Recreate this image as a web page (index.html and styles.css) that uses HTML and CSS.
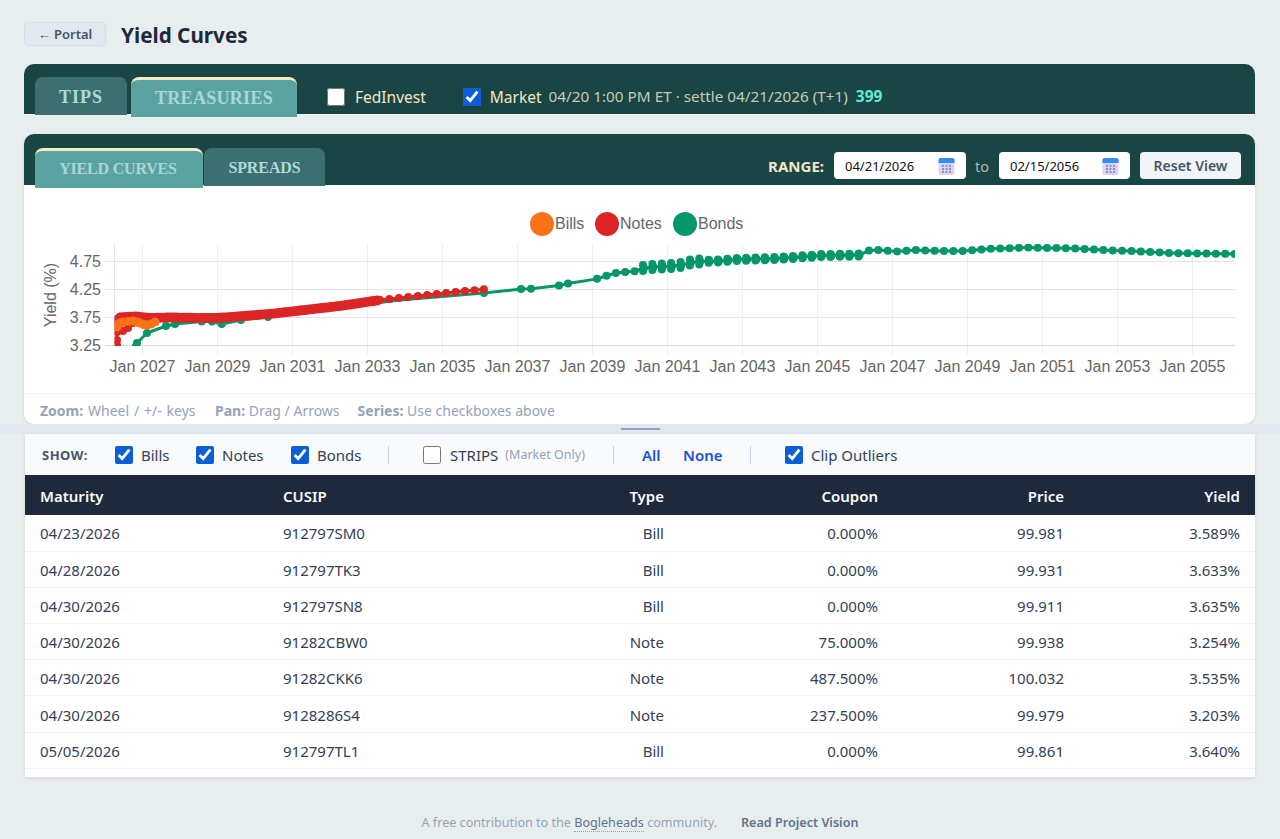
FILE: index.html
```html
<!DOCTYPE html>
<html lang="en">
<head>
<meta charset="utf-8">
<title>Yield Curves</title>
<link rel="stylesheet" href="styles.css">
</head>
<body>
<section class="top">
  <header class="page-head">
    <a class="portal-btn">← Portal</a>
    <h1 class="page-title">Yield Curves</h1>
  </header>

  <div class="bar source-bar">
    <div class="tabs">
      <div class="tab tab-main">TIPS</div>
      <div class="tab tab-main tab-active">TREASURIES</div>
    </div>
    <label class="src src-fed"><input type="checkbox" class="check"><span>FedInvest</span></label>
    <label class="src src-market"><input type="checkbox" class="check" checked><span>Market</span></label>
    <span class="market-meta">04/20 1:00 PM ET · settle 04/21/2026 (T+1)</span>
    <span class="market-count">399</span>
  </div>

  <div class="chart-card">
    <div class="bar chart-bar">
      <div class="tabs">
        <div class="tab tab-sub tab-active tab-yield">YIELD CURVES</div>
        <div class="tab tab-sub tab-spreads">SPREADS</div>
      </div>
      <div class="range">
        <span class="range-label">RANGE:</span>
        <div class="date-field date-a"><span>04/21/2026</span>
          <svg class="cal" viewBox="0 0 17 18"><use href="#cal-icon"/></svg></div>
        <span class="range-to">to</span>
        <div class="date-field date-b"><span>02/15/2056</span>
          <svg class="cal" viewBox="0 0 17 18"><use href="#cal-icon"/></svg></div>
        <button class="reset-btn">Reset View</button>
      </div>
    </div>
    <svg id="chart" class="chart" viewBox="24 185 1231 208" width="1231" height="208"></svg>
    <div class="hints">
      <span class="hint-zoom"><b>Zoom:</b> Wheel / +/- keys</span>
      <span><b>Pan:</b> Drag / Arrows</span>
      <span><b>Series:</b> Use checkboxes above</span>
    </div>
  </div>
</section>

<div class="splitter"><div class="splitter-handle"></div></div>

<section class="bottom">
  <div class="table-card">
    <div class="show-bar">
      <span class="show-label">SHOW:</span>
      <label class="opt opt-bills"><input type="checkbox" class="check" checked>Bills</label>
      <label class="opt opt-notes"><input type="checkbox" class="check" checked>Notes</label>
      <label class="opt opt-bonds"><input type="checkbox" class="check" checked>Bonds</label>
      <span class="sep sep-a"></span>
      <label class="opt opt-strips"><input type="checkbox" class="check check-light">STRIPS <small class="only">(Market Only)</small></label>
      <span class="sep sep-b"></span>
      <a class="quick quick-all">All</a>
      <a class="quick quick-none">None</a>
      <span class="sep sep-c"></span>
      <label class="opt opt-clip"><input type="checkbox" class="check" checked>Clip Outliers</label>
    </div>
    <table class="grid">
      <colgroup>
        <col class="c1"><col class="c2"><col class="c3"><col class="c4"><col class="c5"><col class="c6">
      </colgroup>
      <thead>
        <tr><th>Maturity</th><th>CUSIP</th><th class="r">Type</th><th class="r">Coupon</th><th class="r">Price</th><th class="r">Yield</th></tr>
      </thead>
      <tbody>
        <tr><td>04/23/2026</td><td>912797SM0</td><td class="r">Bill</td><td class="r">0.000%</td><td class="r">99.981</td><td class="r">3.589%</td></tr>
        <tr><td>04/28/2026</td><td>912797TK3</td><td class="r">Bill</td><td class="r">0.000%</td><td class="r">99.931</td><td class="r">3.633%</td></tr>
        <tr><td>04/30/2026</td><td>912797SN8</td><td class="r">Bill</td><td class="r">0.000%</td><td class="r">99.911</td><td class="r">3.635%</td></tr>
        <tr><td>04/30/2026</td><td>91282CBW0</td><td class="r">Note</td><td class="r">75.000%</td><td class="r">99.938</td><td class="r">3.254%</td></tr>
        <tr><td>04/30/2026</td><td>91282CKK6</td><td class="r">Note</td><td class="r">487.500%</td><td class="r">100.032</td><td class="r">3.535%</td></tr>
        <tr><td>04/30/2026</td><td>9128286S4</td><td class="r">Note</td><td class="r">237.500%</td><td class="r">99.979</td><td class="r">3.203%</td></tr>
        <tr><td>05/05/2026</td><td>912797TL1</td><td class="r">Bill</td><td class="r">0.000%</td><td class="r">99.861</td><td class="r">3.640%</td></tr>
      </tbody>
    </table>
  </div>
  <footer class="foot">
    <span>A free contribution to the <a class="foot-link">Bogleheads</a> community.</span>
    <a class="foot-vision">Read Project Vision</a>
  </footer>
</section>

<svg class="defs" width="0" height="0">
  <symbol id="cal-icon" viewBox="0 0 17 18">
    <rect class="cal-body" x="0.5" y="1" width="16" height="17" rx="2"/>
    <path class="cal-top" d="M0.5 6V3a2 2 0 0 1 2-2h12a2 2 0 0 1 2 2v3z"/>
    <g class="cal-dots">
      <rect x="4" y="8" width="2" height="2"/><rect x="7.5" y="8" width="2" height="2"/><rect x="11" y="8" width="2" height="2"/>
      <rect x="4" y="11" width="2" height="2"/><rect x="7.5" y="11" width="2" height="2"/><rect x="11" y="11" width="2" height="2"/>
      <rect x="4" y="14" width="2" height="2"/><rect x="7.5" y="14" width="2" height="2"/><rect x="11" y="14" width="2" height="2"/>
    </g>
  </symbol>
</svg>
<script src="chart.js"></script>
</body>
</html>
```

FILE: styles.css
```css
* { box-sizing: border-box; }
html, body { margin: 0; height: 100%; overflow: hidden; }
body {
  background: #e8eeee;
  font-family: "Noto Sans", "Open Sans", sans-serif;
  color: #1e293b;
}
.defs { position: absolute; }

.top { padding: 22px 25px 0 24px; }
.page-head { display: flex; align-items: center; height: 24px; }
.portal-btn {
  width: 82px; height: 24px; margin-right: 15px;
  display: flex; align-items: center; justify-content: center;
  background: #e2e8f0; border: 1px solid #d5dcea; border-radius: 4px;
  font-size: 13px; font-weight: 600; color: #475569;
}
.page-title { margin: 2px 0 0; font-size: 20.7px; font-weight: 700; color: #1e293b; line-height: 26px; }

.bar { background: #194545; border-radius: 10px 10px 0 0; display: flex; }
.source-bar {
  margin-top: 18px; height: 50px; padding: 13px 0 0 11px;
  align-items: flex-start; box-shadow: 0 1px 0 #f5f8f8;
}
.tabs { display: flex; align-items: flex-start; }
.tab {
  height: 38px; border-radius: 8px 8px 0 0; background: #3e6f70;
  color: #a9dcd8; font-family: "Liberation Serif", serif; font-weight: 700;
  display: flex; align-items: center; justify-content: center;
}
.tab-active { background: #5ba3a1; color: #a5d8d6; border-top: 3px solid #f8e8c4; height: 40px; }
.tab-main { font-size: 18px; letter-spacing: .3px; padding-top: 3px; }
.tab-main:first-child { width: 92px; margin-right: 4px; letter-spacing: 1px; }
.tab-main.tab-active { width: 166px; padding-top: 0; }
.tab-sub { font-size: 16px; letter-spacing: -.1px; padding-top: 2px; }
.tab-yield { width: 168px; margin-right: 1px; padding: 0 2px 2px 0; letter-spacing: -.2px; }
.tab-spreads { width: 121px; }

.src { display: flex; align-items: center; font-size: 15.5px; color: #f5e6c8; height: 18px; margin-top: 11px; }
.src .check { margin: 0 10px 0 0; }
.src-fed { margin-left: 30px; }
.src-market { margin-left: 37px; }
.src-market .check { margin-right: 9px; }
.check { width: 18px; height: 18px; margin: 0; accent-color: #0b5ed7; flex: none; }
.market-meta { font-size: 15.3px; color: #c5ccb6; margin: 9px 0 0 7px; line-height: 20px; }
.market-count { font-size: 15.5px; font-weight: 700; color: #5eead4; margin: 9px 0 0 8px; line-height: 20px; }

.chart-card {
  margin-top: 20px; background: #fff; border-radius: 10px;
  box-shadow: 0 1px 3px rgba(15, 23, 42, .12);
}
.chart-bar { height: 51px; padding: 14px 14px 0 11px; justify-content: space-between; align-items: flex-start; }
.range { display: flex; align-items: center; height: 27px; margin-top: 4px; }
.range-label { font-size: 15px; font-weight: 700; color: #f5e6c8; margin-right: 10px; }
.date-field {
  height: 27px; background: #fff; border-radius: 4px; padding: 0 11px;
  display: flex; align-items: center; justify-content: space-between;
  font-size: 13px; color: #111;
}
.date-a { width: 132px; }
.date-b { width: 131px; }
.cal { width: 17px; height: 18px; }
.cal-body { fill: #dcd3f2; }
.cal-top { fill: #2f8df5; }
.cal-dots rect { fill: #8d8fc9; }
.range-to { width: 13px; font-size: 14.5px; color: #a9b8b5; margin: 0 11px 0 9px; }
.reset-btn {
  width: 101px; height: 27px; margin-left: 10px; border: 0; border-radius: 4px;
  background: #f1f5f9; color: #475569; font: 600 14px "Noto Sans", sans-serif;
}

.chart { display: block; }
.grid-h { stroke: #e4e4e4; stroke-width: 1; }
.grid-v { stroke: #f1f1f1; stroke-width: 1; }
.axis-edge { stroke: #e6e6e6; stroke-width: 1; }
.axis-base { stroke: #d9d9d9; stroke-width: 1; }
.ax-text { font-family: "Liberation Sans", Arial, sans-serif; font-size: 16px; fill: #666; }
.line { fill: none; stroke-width: 3; stroke-linejoin: round; }
.bonds { stroke: #059669; fill: #059669; }
.notes { stroke: #dc2626; fill: #dc2626; }
.bills { stroke: #f97316; fill: #f97316; }
.dot { stroke: none; }
.line.bonds, .line.notes, .line.bills { fill: none; }

.hints {
  height: 31px; padding: 2px 16px 0; border-top: 1px solid #f1f5f9;
  display: flex; align-items: center; gap: 18px;
  font-size: 14px; color: #94a3b8;
  border-radius: 0 0 10px 10px;
}
.hints b { font-weight: 700; }
.hint-zoom { width: 157px; word-spacing: 1.2px; }

.splitter { height: 10px; background: #e2e8f0; padding-top: 4px; }
.splitter-handle { width: 39px; height: 2px; margin: 0 auto; background: #94a3b8; }

.bottom { padding: 0 25px; }
.table-card { height: 343px; background: #fff; overflow: hidden; box-shadow: 0 1px 4px rgba(15, 23, 42, .12); }
.show-bar {
  height: 41px; background: #f8fafc; padding-left: 17px;
  display: flex; align-items: center; font-size: 15px; color: #334155;
}
.show-label { font-size: 13px; font-weight: 700; color: #475569; letter-spacing: .5px; width: 73px; }
.opt { display: flex; align-items: center; }
.opt .check { margin-right: 8px; }
.opt-bills { width: 81px; }
.opt-notes { width: 95px; }
.opt-bonds { width: 97px; }
.sep { width: 1px; height: 18px; background: #cbd5e1; }
.sep-a { margin-right: 34px; }
.opt-strips { width: 190px; }
.opt-strips .check { margin-right: 9px; }
.only { font-size: 12.5px; color: #94a3b8; margin-left: 7px; }
.sep-b { margin-right: 28px; }
.quick { color: #1d4ed8; font-weight: 600; }
.quick-all { width: 41px; }
.quick-none { width: 67px; }
.sep-c { margin-right: 34px; }

.grid { width: 100%; table-layout: fixed; border-collapse: collapse; font-size: 15px; }
.c1 { width: 243px; } .c2 { width: 200px; } .c3 { width: 211px; }
.c4 { width: 214px; } .c5 { width: 186px; } .c6 { width: 176px; }
.grid th {
  height: 40px; padding: 1px 15px 0; background: #1e293b; color: #f8fafc;
  text-align: left; font-weight: 600;
}
.grid td { height: 36.2px; padding: 1px 15px 0; border-bottom: 1px solid #f1f5f9; color: #334155; }
.grid th.r, .grid td.r { text-align: right; }

.foot {
  height: 62px; padding-top: 36px; display: flex; justify-content: center; gap: 24px;
  font-size: 12.6px; color: #94a3b8; line-height: 20px;
}
.foot-link { color: #64748b; border-bottom: 1px dotted #94a3b8; }
.foot-vision { color: #64748b; font-weight: 600; }
```

FILE: chart.js
```js
(function () {
  var NS = 'http://www.w3.org/2000/svg';
  var svg = document.getElementById('chart');
  var L = 114.5, R = 1235, T = 244, B = 345;

  function el(name, attrs, parent, text) {
    var n = document.createElementNS(NS, name);
    for (var k in attrs) n.setAttribute(k, attrs[k]);
    if (text) n.textContent = text;
    (parent || svg).appendChild(n);
    return n;
  }
  function y(v) { return 344.7 - (v - 3.25) * 55.6; }
  function lerp(keys, x) {
    if (x <= keys[0][0]) return keys[0][1];
    for (var i = 1; i < keys.length; i++) {
      if (x <= keys[i][0]) {
        var a = keys[i - 1], b = keys[i];
        return a[1] + (b[1] - a[1]) * (x - a[0]) / (b[0] - a[0]);
      }
    }
    return keys[keys.length - 1][1];
  }

  // legend
  [['Bills', 542, 'bills'], ['Notes', 607, 'notes'], ['Bonds', 685, 'bonds']].forEach(function (s) {
    el('circle', { cx: s[1], cy: 224, r: 12, 'class': 'dot ' + s[2] });
    el('text', { x: s[1] + 13, y: 229, 'class': 'ax-text' }, svg, s[0]);
  });

  // grid
  var i;
  for (i = 0; i < 15; i++) {
    var gx = 142.5 + i * 75;
    el('line', { x1: gx, x2: gx, y1: T, y2: 355, 'class': 'grid-v' });
    el('text', { x: gx, y: 372, 'text-anchor': 'middle', 'class': 'ax-text' }, svg, 'Jan ' + (2027 + i * 2));
  }
  el('line', { x1: L, x2: L, y1: T, y2: B, 'class': 'axis-edge' });
  [4.75, 4.25, 3.75, 3.25].forEach(function (v) {
    var gy = Math.round(y(v)) + 0.5;
    el('line', { x1: 105, x2: R, y1: gy, y2: gy, 'class': v === 3.25 ? 'axis-base' : 'grid-h' });
    el('text', { x: 101, y: gy + 5, 'text-anchor': 'end', 'class': 'ax-text' }, svg, v.toFixed(2));
  });
  el('text', { x: 0, y: 0, 'text-anchor': 'middle', 'class': 'ax-text',
    transform: 'translate(56 295) rotate(-90)' }, svg, 'Yield (%)');

  // clip
  var defs = el('defs', {});
  var clip = el('clipPath', { id: 'plot' }, defs);
  el('rect', { x: L, y: T, width: R - L, height: B - T + 1 }, clip);
  var plot = el('g', { 'clip-path': 'url(#plot)' });

  function series(pts, cls, r) {
    el('polyline', {
      points: pts.map(function (p) { return p[0] + ',' + p[1]; }).join(' '),
      'class': 'line ' + cls
    }, plot);
    pts.forEach(function (p) {
      if (p[2]) return; // vertex only, no marker
      el('circle', { cx: p[0], cy: p[1], r: p[3] || r, 'class': 'dot ' + cls }, plot);
    });
  }

  // bonds
  var bondKeys = [
    [596.7, 279], [605.5, 276], [615.5, 273], [625, 272], [634, 271.5], [643, 268],
    [652, 267], [671, 266], [681, 265], [690, 262.5], [700, 261.5], [718, 261],
    [737, 259.5], [775, 258.5], [793, 257.5], [821, 255.5], [859, 255], [869, 250.5],
    [878, 250], [896, 251.5], [915, 250], [940, 251], [962, 251], [990, 248.8],
    [1030, 247.5], [1075, 248.5], [1110, 250.5], [1130, 251], [1150, 252],
    [1170, 253], [1200, 253.5], [1236, 254]
  ];
  var bonds = [[136, 346], [137, 343], [147, 333], [166, 326], [175, 324], [201.7, 321.5],
    [212, 321.5], [221.7, 324], [241, 320], [268, 317], [300, 312, true], [350, 306, true],
    [400, 300, true], [484, 293], [521, 289], [531, 288.7], [559, 285.6], [568, 283.5]];
  for (var bx = 1234.6; bx > 590; bx -= 9.375) bonds.push([+bx.toFixed(2), lerp(bondKeys, bx)]);
  bonds.sort(function (a, b) { return a[0] - b[0]; });
  series(bonds, 'bonds', 4);
  // paired old-issue bonds in the 2041-2046 range
  for (var dx = 643; dx < 862; dx += 9.375) {
    var off = dx < 700 ? 3 : 1.5;
    var by = lerp(bondKeys, dx);
    el('circle', { cx: dx, cy: by - off, r: 4, 'class': 'dot bonds' }, plot);
    el('circle', { cx: dx, cy: by + off, r: 4, 'class': 'dot bonds' }, plot);
  }

  // notes
  var noteKeys = [[117, 320], [120, 317.5], [135, 316.5], [150, 318], [172, 317.5], [200, 318],
    [217, 318], [245, 316], [270, 314], [292, 311.5], [340, 306], [367, 302], [380, 300],
    [465, 291], [484, 289.3]];
  var notes = [[117, 345], [117, 340], [117, 332], [119, 330], [123, 331], [128, 328], [133, 323], [127, 318]];
  var nx;
  for (nx = 117; nx < 380; nx += 3.1) {
    notes.push([+nx.toFixed(1), lerp(noteKeys, nx), false, 5]);
  }
  for (nx = 380; nx <= 484.5; nx += 9.45) notes.push([+nx.toFixed(1), lerp(noteKeys, nx)]);
  series(notes, 'notes', 4);

  // bills
  var bills = [[117, 327], [117, 325], [120, 323], [123, 322], [128, 321.5], [133, 321], [137, 322],
    [140, 323], [144, 324.5], [147, 325], [151, 324], [155, 322]];
  series(bills, 'bills', 4.5);
})();
```
